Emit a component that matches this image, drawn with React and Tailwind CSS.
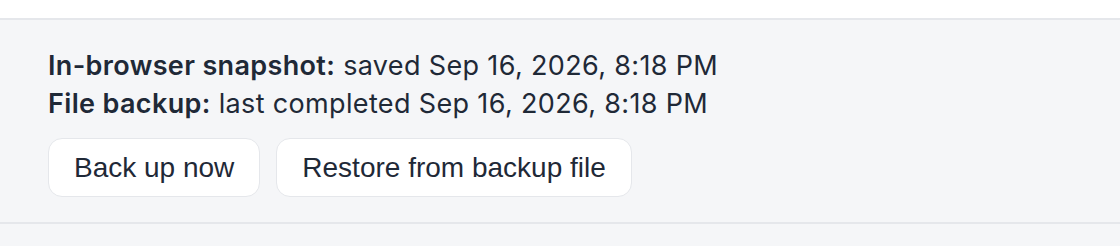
export default function App() {
  return (
    <div className="min-h-[246px] bg-[#f5f6f8]">
      <div className="h-[18px] bg-white" />
      <section className="border-y-2 border-[#e5e7eb] bg-[#f5f6f8] pl-12 pr-6 pt-[27px] pb-[25px] text-[#1f2937]">
        <div className="font-['Inter',sans-serif] text-[27px] leading-[38px] tracking-[0.35px]">
          <p>
            <span className="font-semibold">In-browser snapshot:</span> saved Sep 16, 2026, 8:18 PM
          </p>
          <p>
            <span className="font-semibold">File backup:</span> last completed Sep 16, 2026, 8:18 PM
          </p>
        </div>
        <div className="mt-[15px] flex gap-4 font-['Liberation_Sans',Arial,sans-serif] text-[28px]">
          <button
            type="button"
            className="h-[59px] rounded-[14px] border-[1.5px] border-[#e5e7eb] bg-white px-[25px]"
          >
            Back up now
          </button>
          <button
            type="button"
            className="h-[59px] rounded-[14px] border-[1.5px] border-[#e5e7eb] bg-white px-[25px]"
          >
            Restore from backup file
          </button>
        </div>
      </section>
    </div>
  );
}
